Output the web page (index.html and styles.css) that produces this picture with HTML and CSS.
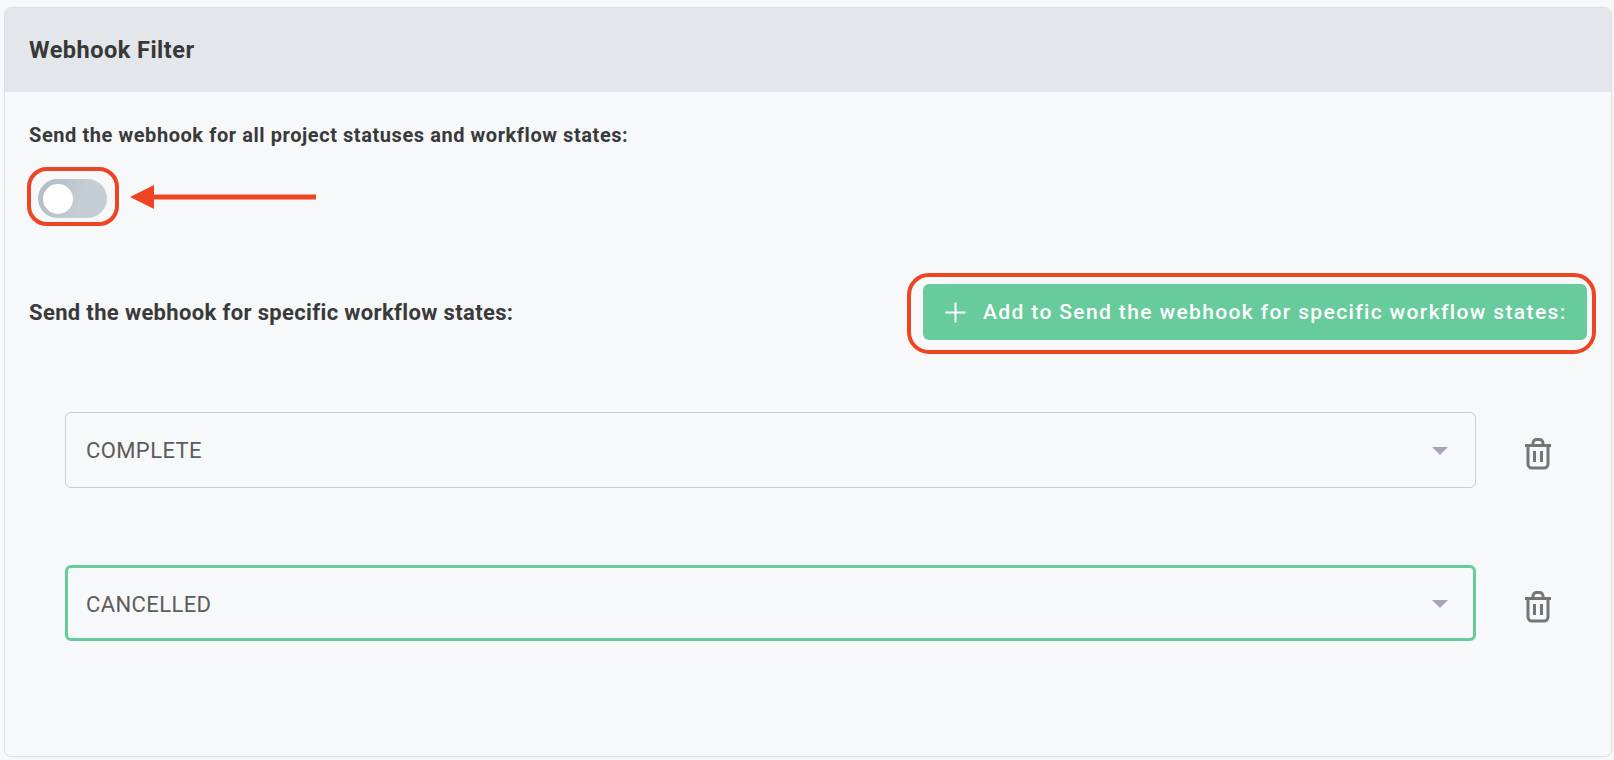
FILE: index.html
```html
<!DOCTYPE html>
<html lang="en">
<head>
<meta charset="utf-8">
<title>Webhook Filter</title>
<link rel="stylesheet" href="styles.css">
</head>
<body>
<section class="card">
  <header class="card-header"><h2 class="card-title">Webhook Filter</h2></header>
  <div class="card-body">
    <p class="label label-all">Send the webhook for all project statuses and workflow states:</p>
    <div class="toggle-row">
      <div class="toggle"><span class="knob"></span></div>
    </div>
    <div class="specific-row">
      <p class="label label-specific">Send the webhook for specific workflow states:</p>
      <button class="add-btn" type="button">
        <svg class="plus" width="21" height="21" viewBox="0 0 21 21"><path d="M10.5 .5v20M.5 10.5h20" fill="none" stroke="#fff" stroke-width="2"/></svg>
        <span>Add to Send the webhook for specific workflow states:</span>
      </button>
    </div>
    <div class="state-row">
      <div class="select"><span>COMPLETE</span><i class="caret"></i></div>
      <svg class="trash" width="28" height="32" viewBox="0 0 28 32"><g fill="none" stroke="#757575" stroke-width="3"><path d="M1 7.5h26"/><path d="M9 7V5a3.6 3.6 0 0 1 3.6-3.6h2.8A3.6 3.6 0 0 1 19 5v2"/><path d="M4 7.5V26a4 4 0 0 0 4 4h12a4 4 0 0 0 4-4V7.5"/><path d="M10.5 13v11M17.5 13v11"/></g></svg>
    </div>
    <div class="state-row second">
      <div class="select active"><span>CANCELLED</span><i class="caret"></i></div>
      <svg class="trash" width="28" height="32" viewBox="0 0 28 32"><g fill="none" stroke="#757575" stroke-width="3"><path d="M1 7.5h26"/><path d="M9 7V5a3.6 3.6 0 0 1 3.6-3.6h2.8A3.6 3.6 0 0 1 19 5v2"/><path d="M4 7.5V26a4 4 0 0 0 4 4h12a4 4 0 0 0 4-4V7.5"/><path d="M10.5 13v11M17.5 13v11"/></g></svg>
    </div>
  </div>
  <div class="mark mark-toggle"></div>
  <div class="mark mark-btn"></div>
  <svg class="arrow" width="188" height="26" viewBox="0 0 188 26"><path d="M0 13 24 1v24z" fill="#ef4423"/><path d="M23 13h163" stroke="#ef4423" stroke-width="5"/></svg>
</section>
</body>
</html>
```
FILE: styles.css
```css
* { box-sizing: border-box; }
html, body { margin: 0; height: 100%; }
body {
  background: #f7f8fa;
  padding: 7px 2px 0 4px;
  font-family: Roboto, "Liberation Sans", sans-serif;
  color: #333;
  overflow: hidden;
}
.card {
  position: relative;
  height: 750px;
  border: 1px solid #d9dfe4;
  border-radius: 7px;
  background: #f7f8fa;
  overflow: hidden;
}
.card-header {
  height: 84px;
  background: #e3e6eb;
  display: flex;
  align-items: center;
  padding-left: 24px;
}
.card-title {
  margin: 0;
  font-size: 23.5px;
  font-weight: 700;
  letter-spacing: 0.48px;
  color: #383838;
}
.card-body { padding: 33px 24px 0 24px; }
.label {
  margin: 0;
  line-height: 20px;
  font-weight: 700;
  color: #3a3a3a;
}
.label-all { font-size: 20px; letter-spacing: 0.57px; }
.label-specific { font-size: 22px; letter-spacing: 0.35px; padding-top: 2px; }
.toggle-row { margin-top: 34px; padding-left: 9px; }
.toggle {
  width: 69px;
  height: 39px;
  border-radius: 20px;
  background: linear-gradient(110deg, #b4bec6 0%, #b9c2ca 30%, #c5cdd5 60%);
  padding: 5px;
}
.knob {
  display: block;
  width: 30px;
  height: 30px;
  border-radius: 50%;
  background: #fff;
}
.specific-row {
  margin-top: 66px;
  display: flex;
  align-items: center;
  justify-content: space-between;
}
.add-btn {
  width: 664px;
  height: 56px;
  border: 0;
  border-radius: 6px;
  background: #68cb9b;
  color: #fff;
  display: flex;
  align-items: center;
  padding: 0 0 0 22px;
  font-family: inherit;
  font-size: 21px;
  font-weight: 500;
  letter-spacing: 1.37px;
}
.plus { margin-right: 17px; flex: none; }
.state-row {
  display: flex;
  align-items: center;
  margin-top: 72px;
  padding-left: 36px;
}
.state-row.second { margin-top: 77px; }
.select {
  width: 1411px;
  height: 76px;
  flex: none;
  border: 1px solid #c9ced6;
  border-radius: 6px;
  display: flex;
  align-items: center;
  justify-content: space-between;
  padding: 0 27px 0 20px;
  font-size: 22px;
  letter-spacing: 0.4px;
  color: #5c5c5c;
}
.select.active { border: 3px solid #68cb9b; padding: 2px 25px 0 18px; }
.caret {
  width: 0;
  height: 0;
  border-left: 8px solid transparent;
  border-right: 8px solid transparent;
  border-top: 8px solid #a5a4bf;
  margin-top: 2px;
}
.select.active .caret { margin-top: 0; }
.trash { margin-left: 48px; flex: none; margin-top: 8px; }
.mark {
  position: absolute;
  border: 4px solid #ef4423;
  border-radius: 20px;
}
.mark-toggle { left: 22px; top: 159px; width: 92px; height: 59px; border-width: 4.5px; }
.mark-btn { left: 902px; top: 265px; width: 689px; height: 81px; border-radius: 22px; }
.arrow { position: absolute; left: 125px; top: 176px; }
```
